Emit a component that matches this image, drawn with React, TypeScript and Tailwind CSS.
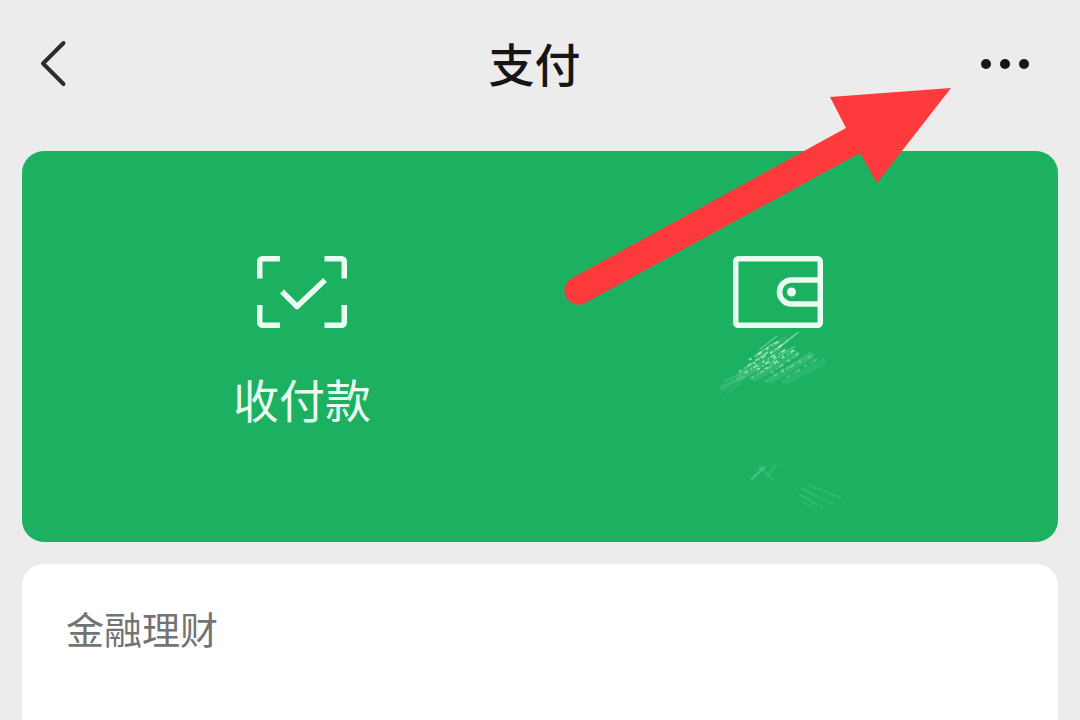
type Streak = [x1: number, y1: number, x2: number, y2: number, opacity: number];

const softStreaks: Streak[] = [
  [4, 60, 40, 38, 0.07],
  [20, 50, 62, 24, 0.1],
  [36, 50, 76, 26, 0.12],
  [52, 52, 92, 28, 0.1],
  [66, 54, 104, 34, 0.08],
  [40, 28, 66, 12, 0.08],
];

const streaks: Streak[] = [
  [51, 26, 80, 4, 0.45],
  [58, 22, 76, 6, 0.2],
  [40, 22, 58, 8, 0.35],
  [36, 28, 56, 14, 0.3],
  [50, 36, 76, 18, 0.35],
  [24, 42, 46, 26, 0.25],
  [4, 54, 28, 42, 0.16],
  [2, 60, 26, 48, 0.14],
  [8, 66, 22, 54, 0.12],
  [66, 42, 92, 24, 0.14],
];

const brokenStreaks: Streak[] = [
  [30, 32, 62, 12, 0.6],
  [34, 36, 66, 15, 0.5],
  [20, 44, 52, 22, 0.5],
  [26, 45, 60, 24, 0.5],
  [38, 42, 70, 19, 0.6],
  [46, 41, 78, 20, 0.6],
  [52, 45, 80, 25, 0.4],
  [32, 50, 60, 34, 0.35],
  [62, 44, 94, 27, 0.3],
  [68, 49, 98, 31, 0.3],
  [46, 54, 70, 38, 0.25],
];

const faintStreaks: Streak[] = [
  [32, 22, 46, 8, 0.2],
  [40, 8, 54, 22, 0.1],
  [48, 18, 58, 6, 0.1],
  [80, 36, 104, 50, 0.1],
  [82, 30, 114, 46, 0.1],
  [88, 26, 122, 40, 0.09],
  [84, 44, 98, 52, 0.08],
];

function Streaks({ items }: { items: Streak[] }) {
  return (
    <>
      {items.map(([x1, y1, x2, y2, opacity]) => (
        <line key={`${x1}-${y1}`} x1={x1} y1={y1} x2={x2} y2={y2} strokeOpacity={opacity} />
      ))}
    </>
  );
}

function BackIcon() {
  return (
    <svg width="28" height="48" viewBox="0 0 28 48" fill="none" stroke="#2c2c2e" strokeWidth="4" strokeLinecap="round" aria-hidden="true">
      <path d="M23.500 3 3 23.500 23.500 44" strokeLinejoin="round" />
    </svg>
  );
}

function MoreIcon() {
  return (
    <svg width="48" height="10" viewBox="0 0 48 10" fill="#161616" aria-hidden="true">
      <circle cx="5" cy="5" r="5" />
      <circle cx="24" cy="5" r="5" />
      <circle cx="43" cy="5" r="5" />
    </svg>
  );
}

function ScanCheckIcon() {
  return (
    <svg width="90" height="72" viewBox="0 0 90 72" fill="none" stroke="#eafff2" strokeWidth="5.500" aria-hidden="true">
      <path d="M2.750 22.500V5.500a2.750 2.750 0 0 1 2.750-2.750h17.500M67.500 2.750h17a2.750 2.750 0 0 1 2.750 2.750v17M87.250 49v17.500a2.750 2.750 0 0 1-2.750 2.750h-17M23 69.250H5.500a2.750 2.750 0 0 1-2.750-2.750V49" />
      <path d="m25 35.500 15 15L68 24" strokeLinejoin="round" />
    </svg>
  );
}

function WalletIcon() {
  return (
    <svg width="90" height="72" viewBox="0 0 90 72" fill="none" stroke="#eafff2" strokeWidth="5.500" aria-hidden="true">
      <rect x="2.750" y="2.750" width="84.500" height="66.500" rx="2.500" />
      <path d="M87 24H58.500a12 12 0 0 0 0 24H87" />
      <circle cx="58.500" cy="36" r="4.500" fill="#eafff2" stroke="none" />
    </svg>
  );
}

function Smudge() {
  return (
    <svg className="absolute left-1/2 top-full -translate-x-1/2" width="142" height="190" viewBox="-12 0 142 190" fill="none" stroke="#d8ffe6" strokeWidth="1.500" aria-hidden="true">
      <g strokeWidth="7" strokeLinecap="round">
        <Streaks items={softStreaks} />
      </g>
      <Streaks items={streaks} />
      <g strokeWidth="2" strokeDasharray="3 4 1 2 5 5">
        <Streaks items={brokenStreaks} />
      </g>
      <g transform="translate(0 130)" strokeWidth="2.500">
        <Streaks items={faintStreaks} />
      </g>
    </svg>
  );
}

function PointerArrow() {
  return (
    <svg className="pointer-events-none absolute right-[128px] top-[86px]" width="390" height="222" viewBox="0 0 390 222" fill="#ff3a3d" aria-hidden="true">
      <path d="M389 2 268 11 284 42 10 192A14 14 0 0 0 23 217L298 67 315 97Z" />
    </svg>
  );
}

export default function App() {
  return (
    <div className="relative flex min-h-screen flex-col overflow-hidden bg-[#ececec] font-['Noto_Sans_CJK_SC',sans-serif]">
      <header className="flex h-[128px] items-center justify-between pl-10 pr-[51px]">
        <button type="button" aria-label="返回" className="flex w-12 justify-start">
          <BackIcon />
        </button>
        <h1 className="pb-1 text-[46px] font-medium leading-[48px] text-[#161616]">支付</h1>
        <button type="button" aria-label="更多" className="flex w-12 justify-end">
          <MoreIcon />
        </button>
      </header>

      <main className="flex grow flex-col gap-[22px] px-[22px] pt-[23px]">
        <section className="grid grid-cols-2 items-start rounded-[22px] bg-[#1cb061] px-[42px] pb-[120px] pt-[105px]">
          <button type="button" className="flex flex-col items-center gap-[46px] text-[46px] leading-[48px] text-[#eafff2]">
            <ScanCheckIcon />
            收付款
          </button>
          <button type="button" aria-label="钱包" className="relative flex justify-center">
            <WalletIcon />
            <Smudge />
          </button>
        </section>

        <section className="grow rounded-t-[22px] bg-white px-11 pt-[42px]">
          <h2 className="text-[38px] leading-[44px] text-[#737373]">金融理财</h2>
        </section>
      </main>

      <PointerArrow />
    </div>
  );
}
